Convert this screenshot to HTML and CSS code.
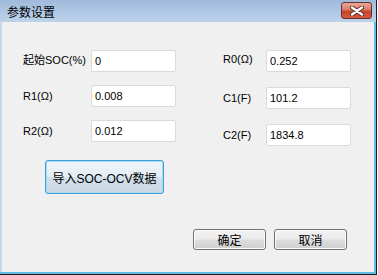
FILE: index.html
```html
<!doctype html>
<html>
    <head>
        <meta charset="utf-8">
        <link rel="stylesheet" href="styles.css">
    </head>
    <body>
        <div class="window">
            <div class="titlebar">
                <span class="title">参数设置</span>
                <span class="close">
                    <svg width="14" height="10" viewBox="0 0 14 10">
                        <path d="M2 1.5 L12 8.5 M12 1.5 L2 8.5" stroke="#5a2a24" stroke-width="4.2" stroke-linecap="round"/>
                        <path d="M2 1.5 L12 8.5 M12 1.5 L2 8.5" stroke="#fff" stroke-width="2.4" stroke-linecap="round"/>
                    </svg>
                </span>
            </div>
            <div class="client">
                <div class="fields">
                    <div class="col col-left">
                        <div class="row"><label class="lbl">起始SOC(%)</label><input class="txt" value="0"></div>
                        <div class="row"><label class="lbl">R1(Ω)</label><input class="txt" value="0.008"></div>
                        <div class="row"><label class="lbl">R2(Ω)</label><input class="txt" value="0.012"></div>
                        <button class="btn btn-import">导入SOC-OCV数据</button>
                    </div>
                    <div class="col col-right">
                        <div class="row"><label class="lbl">R0(Ω)</label><input class="txt" value="0.252"></div>
                        <div class="row"><label class="lbl">C1(F)</label><input class="txt" value="101.2"></div>
                        <div class="row"><label class="lbl">C2(F)</label><input class="txt" value="1834.8"></div>
                    </div>
                </div>
                <div class="actions">
                    <button class="btn btn-small">确定</button>
                    <button class="btn btn-small">取消</button>
                </div>
            </div>
        </div>
    </body>
</html>
```

FILE: styles.css
```css
*{
    margin: 0;
    padding: 0;
    box-sizing: border-box;
}
html,body{
    width: 378px;
    height: 275px;
    background: #fff;
    overflow: hidden;
    font-family: "Liberation Sans", "Noto Sans CJK SC", sans-serif;
    font-size: 11px;
    color: #000;
}
.window{
    width: 377px;
    height: 275px;
    display: flex;
    flex-direction: column;
    background: #62bce6;
    border-right: 1px solid #1e1e1e;
    border-bottom: 1px solid #1e1e1e;
}
.titlebar{
    height: 22px;
    display: flex;
    align-items: center;
    justify-content: space-between;
    padding: 0 4px 0 7px;
    background: linear-gradient(#9fbadb, #bcd3ea);
}
.title{
    font-family: "Noto Sans CJK SC", sans-serif;
    font-size: 12px;
    line-height: 1;
    margin-top: 1px;
}
.close{
    width: 31px;
    height: 17px;
    margin-top: -1px;
    display: flex;
    align-items: center;
    justify-content: center;
    border: 1px solid #6a2e2a;
    border-radius: 3px;
    background: linear-gradient(#e9a898 0%, #d97a64 45%, #c5452b 55%, #d4583c 100%);
}
.client{
    flex: 1;
    display: flex;
    flex-direction: column;
    justify-content: space-between;
    margin: 0 2px 2px 0;
    border-left: 2px solid #c6d9ec;
    background: #f0f0f0;
    padding: 28px 27px 22px 21px;
}
.fields{
    display: flex;
    gap: 47px;
}
.col{
    display: flex;
    flex-direction: column;
}
.col-left{
    gap: 13px;
}
.col-right{
    gap: 15px;
}
.row{
    display: flex;
    align-items: center;
}
.col-left .lbl{
    width: 68px;
}
.col-right .lbl{
    width: 43px;
}
.lbl{
    font-size: 11px;
}
.row:first-child .lbl{
    margin-top: -4px;
}
.lbl, .btn{
    font-family: "Liberation Sans", "Noto Sans CJK SC", sans-serif;
}
.txt{
    width: 85px;
    height: 22px;
    border: 1px solid #dadada;
    border-radius: 2px;
    background: #fff;
    padding: 0 3px;
    font-family: "Liberation Sans", sans-serif;
    font-size: 11px;
    color: #000;
    outline: none;
}
.btn{
    color: #000;
    cursor: default;
}
.btn-import{
    width: 119px;
    height: 34px;
    margin: 5px 0 0 22px;
    font-size: 12px;
    border: 1px solid #3d9ed9;
    border-radius: 3px;
    box-shadow: inset 0 0 0 1px #a6dcf3;
    background: linear-gradient(#eef5fa 0%, #e4eef5 48%, #d1dfe9 52%, #c9d9e4 100%);
}
.actions{
    display: flex;
    justify-content: flex-end;
    gap: 8px;
}
.btn-small{
    width: 73px;
    height: 21px;
    font-size: 12px;
    border: 1px solid #707070;
    border-radius: 3px;
    box-shadow: inset 0 0 0 1px #fbfbfb;
    background: linear-gradient(#f2f2f2 0%, #ebebeb 48%, #dddddd 52%, #cfcfcf 100%);
}
```
